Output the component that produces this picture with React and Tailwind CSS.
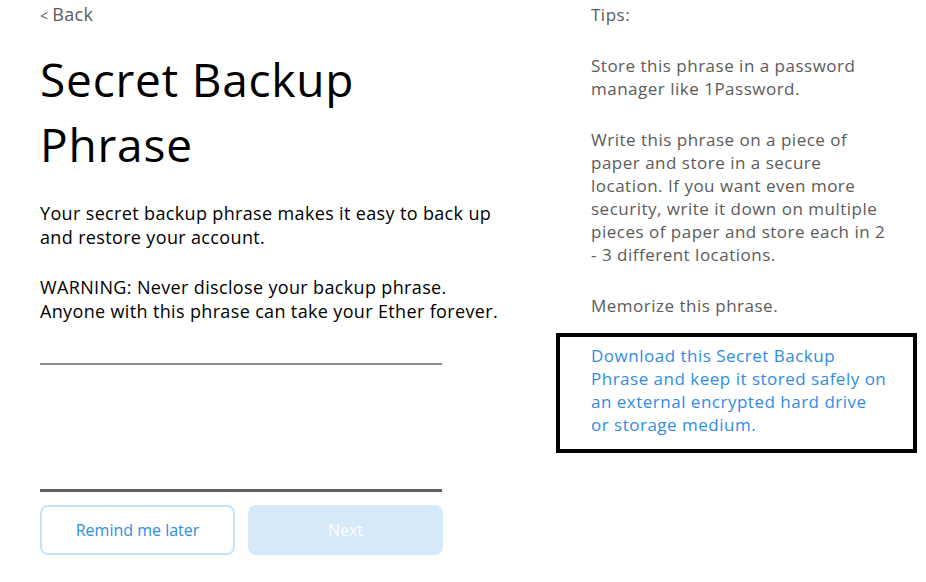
import React from "react";

export default function App() {
  return (
    <div
      className="w-[926px] h-[582px] bg-white overflow-hidden flex"
      style={{ fontFamily: "'Open Sans', 'Noto Sans', sans-serif" }}
    >
      {/* LEFT */}
      <div className="w-[556px] pl-[40px] flex flex-col">
        <div className="text-[18px] leading-[28px] text-[#5b5b5b] tracking-[0.3px]">
          <span className="text-[14px] mr-[4px]">&lt;</span>Back
        </div>

        <h1 className="text-[46px] leading-[65px] text-black mt-[17px] font-normal tracking-[0.8px]">
          Secret Backup
          <br />
          Phrase
        </h1>

        <p className="text-[18px] leading-[24px] text-black mt-[24px] whitespace-nowrap tracking-[0.35px]">
          Your secret backup phrase makes it easy to back up
          <br />
          and restore your account.
        </p>

        <p className="text-[18px] leading-[24px] text-black mt-[26px] whitespace-nowrap tracking-[0.35px]">
          WARNING: Never disclose your backup phrase.
          <br />
          Anyone with this phrase can take your Ether forever.
        </p>

        <div className="w-[402px] h-[2px] bg-[#8a8a8a] mt-[40px]" />

        <div className="w-[402px] h-[3px] bg-[#5f5f5f] mt-[124px]" />

        <div className="flex gap-[13px] mt-[13px] w-[403px]">
          <button className="w-[195px] h-[50px] border-2 border-[#c7e3fa] rounded-[8px] text-[#2f8ce6] text-[16px]">
            Remind me later
          </button>
          <button className="w-[195px] h-[50px] rounded-[8px] bg-[#d6e9f8] text-white text-[16px]">
            Next
          </button>
        </div>
      </div>

      {/* RIGHT */}
      <div className="flex-1 flex flex-col text-[17px] leading-[23px] text-[#5b5b5b] whitespace-nowrap tracking-[0.5px]">
        <div className="pl-[35px] mt-[3px]">Tips:</div>

        <p className="pl-[35px] mt-[28px]">
          Store this phrase in a password
          <br />
          manager like 1Password.
        </p>

        <p className="pl-[35px] mt-[28px]">
          Write this phrase on a piece of
          <br />
          paper and store in a secure
          <br />
          location. If you want even more
          <br />
          security, write it down on multiple
          <br />
          pieces of paper and store each in 2
          <br />- 3 different locations.
        </p>

        <p className="pl-[35px] mt-[28px]">Memorize this phrase.</p>

        <div className="mt-[16px] w-[361px] h-[120px] border-[4px] border-black pl-[31px] pt-[7px]">
          <p className="text-[#2f8ce6]">
            Download this Secret Backup
            <br />
            Phrase and keep it stored safely on
            <br />
            an external encrypted hard drive
            <br />
            or storage medium.
          </p>
        </div>
      </div>
    </div>
  );
}
